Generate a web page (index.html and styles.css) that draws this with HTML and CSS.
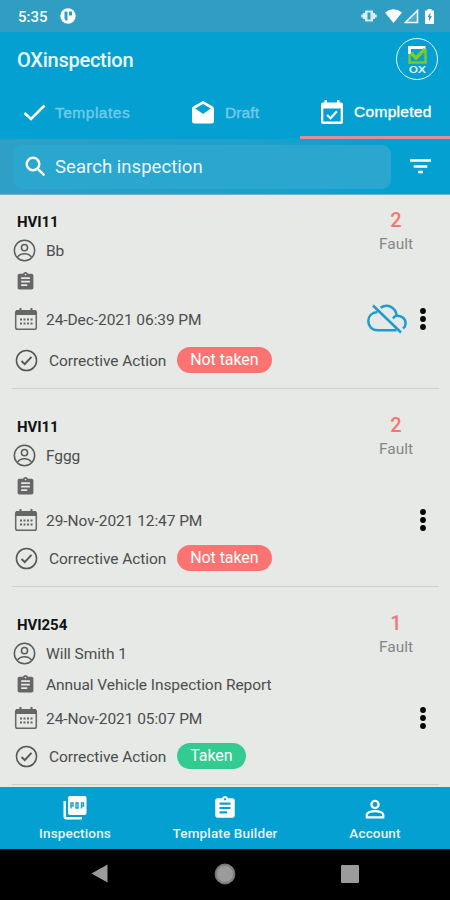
FILE: index.html
```html
<!DOCTYPE html>
<html lang="en">
<head>
<meta charset="utf-8">
<title>OXinspection</title>
<link rel="stylesheet" href="styles.css">
</head>
<body>
<svg width="0" height="0" class="sprite">
  <symbol id="user" viewBox="0 0 24 24"><g fill="none" stroke="currentColor" stroke-width="1.6"><circle cx="12" cy="12" r="10.6"/><circle cx="12" cy="9" r="3.2"/><path d="M4.7 19c1.6-2.6 4-3.6 7.300-3.600s5.700 1 7.300 3.600"/></g></symbol>
  <symbol id="clip" viewBox="0 0 24 24"><path fill="currentColor" d="M19 3h-4.180C14.400 1.840 13.300 1 12 1s-2.400.840-2.820 2H5c-1.100 0-2 .900-2 2v14c0 1.100.900 2 2 2h14c1.100 0 2-.900 2-2V5c0-1.100-.900-2-2-2zm-7 0c.550 0 1 .450 1 1s-.450 1-1 1-1-.450-1-1 .450-1 1-1zm2 14H7v-2h7v2zm3-4H7v-2h10v2zm0-4H7V7h10v2z"/></symbol>
  <symbol id="cal" viewBox="0 0 24 24"><rect x="1.700" y="3.700" width="20.600" height="18.600" rx="1.800" fill="none" stroke="currentColor" stroke-width="1.500"/><path fill="currentColor" d="M2 3h20v5H2zM5.500 1h2v3h-2zM16.500 1h2v3h-2zM6 11.500h2v2H6zM9.500 11.500h2v2h-2zM13 11.500h2v2h-2zM16.500 11.500h2v2h-2zM6 15.500h2v2H6zM9.500 15.500h2v2h-2zM13 15.500h2v2h-2zM16.500 15.500h2v2h-2z"/></symbol>
  <symbol id="done" viewBox="0 0 24 24"><g fill="none" stroke="currentColor" stroke-width="1.600"><circle cx="12" cy="12" r="10.500"/><path stroke-width="2" d="M6.800 12.500l3.400 3.300 7-7.600"/></g></symbol>
  <symbol id="more" viewBox="0 0 8 24"><g fill="#050505"><circle cx="4" cy="4" r="2.900"/><circle cx="4" cy="12" r="2.900"/><circle cx="4" cy="20" r="2.900"/></g></symbol>
</svg>
<div class="app">
  <div class="status">
    <span class="clock">5:35</span>
    <svg width="16" height="16" viewBox="0 0 16 16"><circle cx="8" cy="8" r="7.700" fill="#fff"/><path d="M4.500 3.500h3v9h-2l-1-2zM9 3.500h3v4H9z" fill="#309dc2"/></svg>
    <div class="signals">
      <svg width="16" height="14" viewBox="0 0 16 14"><path d="M4 1.500h8v11H4zM2 4h2v6H2zM12 4h2v6h-2zM.300 5.500h2v3h-2zM13.700 5.500h2v3h-2z" fill="#d5edf5"/><path d="M6.500 3.500h3v7h-3z" fill="#309dc2"/></svg>
      <svg class="wifi" width="17" height="14" viewBox="0 0 17 14"><path d="M0 3.500Q8.500-3 17 3.500L8.500 14z" fill="#fff"/></svg>
      <svg class="cell" width="15" height="15" viewBox="0 0 15 15"><path d="M13.500 1.500v12H1.500z" fill="#51abc9" stroke="#f2fafc" stroke-width="1.600"/></svg>
      <svg class="battery" width="9" height="15" viewBox="0 0 9 15"><path d="M2.500 0h4v1.500H9V15H0V1.500h2.500z" fill="#fff"/><path d="M5.500 3.500L2.500 8H4v4.500L6.800 7H5.200z" fill="#309dc2"/></svg>
    </div>
  </div>
  <header class="header">
    <h1>OXinspection</h1>
    <div class="logo">
      <svg width="19" height="18" viewBox="0 0 19 18"><path d="M1.500 8V1.500h16" fill="none" stroke="#fff" stroke-width="3"/><path d="M1.500 8v8.500h16V3" fill="none" stroke="#7cc52d" stroke-width="2.500"/><path d="M3 7l5 5L17 3" fill="none" stroke="#83cb25" stroke-width="3.400"/></svg>
      <span>OX</span>
    </div>
  </header>
  <nav class="tabs">
    <div class="tab tab-templates"><svg width="23" height="17" viewBox="0 0 23 17"><path d="M1.500 9l6.500 6L21.500 1.500" fill="none" stroke="#fff" stroke-width="2.600"/></svg><span>Templates</span></div>
    <div class="tab tab-draft"><svg width="24" height="23" viewBox="0 0 24 23"><path fill="#fff" d="M1 8Q1 6 3 5L12 0l9 5q2 1 2 3v12q0 2.500-2.500 2.500h-17Q1 22.500 1 20z"/><path fill="#05a0d2" d="M4.300 7.500L12 3l7.700 4.500L12 13z"/></svg><span>Draft</span></div>
    <div class="tab active"><svg width="22" height="24" viewBox="0 0 22 24"><path fill="#fff" d="M3.500 0H6v2.500h10V0h2.500v2.500H20q2 0 2 2V22q0 2-2 2H2q-2 0-2-2V4.500q0-2 2-2h1.500z"/><path fill="#05a0d2" d="M2.300 8.500h17.400v13H2.300z"/><path d="M6 15l3.500 3.300 6.500-7" fill="none" stroke="#fff" stroke-width="2.200"/></svg><span>Completed</span></div>
  </nav>
  <div class="searchbar">
    <div class="field">
      <svg width="21" height="21" viewBox="0 0 21 21"><g fill="none" stroke="#fff" stroke-width="2.500"><circle cx="8" cy="8" r="6.300"/><path d="M12.800 12.800l6.500 6.500"/></g></svg>
      <span>Search inspection</span>
    </div>
    <svg class="filter" width="21" height="15" viewBox="0 0 21 15"><path d="M0 1.500h21M3.700 7.500h13.600M8 13h5" stroke="#fff" stroke-width="2.500"/></svg>
  </div>
  <main class="list">
    <article class="item pending">
      <div class="details">
        <h2>HVI11</h2>
        <div class="row user"><svg><use href="#user"/></svg><span>Bb</span></div>
        <div class="row report"><svg><use href="#clip"/></svg></div>
        <div class="row date"><svg><use href="#cal"/></svg><span>24-Dec-2021 06:39 PM</span></div>
        <div class="row action"><svg><use href="#done"/></svg><span>Corrective Action</span><b class="pill">Not taken</b></div>
      </div>
      <div class="side">
        <div class="fault"><b>2</b><span>Fault</span></div>
        <div class="tools">
          <svg class="cloud" viewBox="0 0 40 30"><g fill="none" stroke="#1e9ccc" stroke-width="2.500"><path d="M10.500 8C5 8.500 1.300 12 1.300 17c0 5.300 3.700 9.300 9.200 9.300h19"/><path d="M13.500 3.600C21-1 28.500 3.500 29.700 11.500c5.500.500 8.900 3.500 8.900 8 0 2-.800 3.600-2.600 5M26 14.500q1.500-2.500 4-3"/><path d="M6 1.500l28 27"/></g></svg>
          <svg class="more"><use href="#more"/></svg>
        </div>
      </div>
    </article>
    <article class="item">
      <div class="details">
        <h2>HVI11</h2>
        <div class="row user"><svg><use href="#user"/></svg><span>Fggg</span></div>
        <div class="row report"><svg><use href="#clip"/></svg></div>
        <div class="row date"><svg><use href="#cal"/></svg><span>29-Nov-2021 12:47 PM</span></div>
        <div class="row action"><svg><use href="#done"/></svg><span>Corrective Action</span><b class="pill">Not taken</b></div>
      </div>
      <div class="side">
        <div class="fault"><b>2</b><span>Fault</span></div>
        <div class="tools"><svg class="more"><use href="#more"/></svg></div>
      </div>
    </article>
    <article class="item">
      <div class="details">
        <h2>HVI254</h2>
        <div class="row user"><svg><use href="#user"/></svg><span>Will Smith 1</span></div>
        <div class="row report"><svg><use href="#clip"/></svg><span>Annual Vehicle Inspection Report</span></div>
        <div class="row date"><svg><use href="#cal"/></svg><span>24-Nov-2021 05:07 PM</span></div>
        <div class="row action"><svg><use href="#done"/></svg><span>Corrective Action</span><b class="pill taken">Taken</b></div>
      </div>
      <div class="side">
        <div class="fault"><b>1</b><span>Fault</span></div>
        <div class="tools"><svg class="more"><use href="#more"/></svg></div>
      </div>
    </article>
  </main>
  <nav class="bottom">
    <div><svg width="24" height="24" viewBox="0 0 24 24"><path d="M1.700 5v15.500q0 1.800 1.800 1.800H19" fill="none" stroke="#fff" stroke-width="2.400"/><rect x="5" y="0" width="18.500" height="19" rx="2" fill="#fff"/><path d="M8 12.500V7h2v3H8M13 7v5h2V7zM18.500 12.500V7h2v3h-2" fill="none" stroke="#1c9dc9" stroke-width="1.400"/></svg><span>Inspections</span></div>
    <div><svg width="26" height="26" viewBox="0 0 24 24" class="builder"><use href="#clip"/></svg><span>Template Builder</span></div>
    <div><svg width="20" height="20" viewBox="0 0 20 20" class="person"><g fill="none" stroke="#fff" stroke-width="2.300"><circle cx="10" cy="5.500" r="3.600"/><path d="M1.800 18.300v-2.500c0-2.500 4.500-3.700 8.200-3.700s8.200 1.200 8.200 3.700v2.500z"/></g></svg><span>Account</span></div>
  </nav>
  <div class="system">
    <svg width="17" height="19" viewBox="0 0 17 19"><path d="M16.500.500v18L.500 9.500z" fill="#9b9b9b"/></svg>
    <svg width="22" height="22" viewBox="0 0 22 22"><circle cx="11" cy="11" r="9.800" fill="#9b9b9b" stroke="#777" stroke-width="1.200"/><circle cx="11" cy="11" r="8.500" fill="none" stroke="#666" stroke-width=".6"/></svg>
    <svg width="18" height="18" viewBox="0 0 18 18"><rect width="18" height="18" rx="1" fill="#9b9b9b"/></svg>
  </div>
</div>
</body>
</html>
```
FILE: styles.css
```css
* { box-sizing: border-box; }
body { margin: 0; font-family: Roboto, "Liberation Sans", sans-serif; }
svg { display: block; flex: none; }
.sprite { position: absolute; }
h1, h2 { margin: 0; }
.app { width: 450px; height: 900px; display: flex; flex-direction: column; background: #e6e9e6; overflow: hidden; white-space: nowrap; }
.status { height: 32px; background: #309dc2; color: #fff; display: flex; align-items: center; padding: 0 16px 0 18px; }
.clock { font-size: 15px; font-weight: 500; width: 42px; padding-top: 1px; }
.signals { display: flex; align-items: center; margin-left: auto; }
.wifi { margin-left: 8px; }
.cell { margin-left: 2px; }
.battery { margin-left: 6px; }
.header { height: 56px; background: #05a0d2; display: flex; align-items: center; justify-content: space-between; padding: 0 12px 2px 17px; }
h1 { color: #eaf8fc; font-size: 20px; font-weight: 500; line-height: 24px; letter-spacing: -.25px; padding-top: 1px; }
.logo { width: 42px; height: 42px; border: 1.5px solid #e4f5fb; border-radius: 50%; color: #e4f5fb; display: flex; flex-direction: column; align-items: center; padding-top: 7px; }
.logo span { font: 600 9px/12px Inter, sans-serif; transform: scaleX(1.35); }
.tabs { height: 51px; background: #05a0d2; display: grid; grid-template-columns: repeat(3, 1fr); }
.tab { display: flex; align-items: center; color: #76c9e5; font: 500 15.500px "Liberation Sans", sans-serif; -webkit-text-stroke: .4px currentColor; padding-bottom: 2px; letter-spacing: .5px; }
.tab-templates { padding-left: 23px; gap: 9px; }
.tab-draft { padding-left: 41px; gap: 10px; letter-spacing: .1px; }
.active { padding-left: 21px; gap: 11px; color: #fff; border-bottom: 3px solid #e28d9f; padding-bottom: 0; letter-spacing: .3px; }
.searchbar { height: 56px; background: linear-gradient(90deg, #309fc5, #1ca0cb 60%, #05a0d2 85%); display: flex; align-items: center; border-bottom: 1px solid #6fb3ca; }
.field { width: 378px; height: 44px; margin-left: 13px; background: #2ba6ce; border-radius: 9px; display: flex; align-items: center; gap: 9px; padding-left: 12px; color: #eaf8fc; font-size: 18.500px; letter-spacing: .05px; }
.field span { padding-top: 1px; }
.filter { margin-left: 19px; }
.list { height: 592px; overflow: hidden; color: #4c4e4d; font-size: 15.500px; letter-spacing: -.07px; }
.item { height: 198px; padding-top: 26px; margin-left: 12px; width: 427px; border-bottom: 1px solid #ced1cf; display: flex; justify-content: space-between; }
h2 { height: 24px; line-height: 25px; font-size: 15px; font-weight: 700; color: #111; padding-left: 5px; }
.row { display: flex; align-items: center; }
.row span { padding-top: 1px; }
.user { height: 32px; padding-left: 1px; gap: 10px; }
.user svg { width: 23px; height: 23px; color: #5b5d5c; }
.report { height: 30px; padding-left: 3px; gap: 10px; }
.report svg { width: 21px; height: 21px; color: #666; }
.date { height: 38px; padding-left: 2px; gap: 8px; }
.date svg { width: 24px; height: 24px; color: #666; }
.action { height: 38px; padding-left: 3px; }
.action svg { width: 23px; height: 23px; color: #555756; margin-right: 11px; }
.pill { background: #fb7471; color: #fff; font-weight: 400; font-size: 16px; height: 26px; line-height: 26px; padding: 0 13px; border-radius: 13px; margin-left: 11px; }
.pill.taken { background: #32cb91; }
.side { width: 86px; display: flex; flex-direction: column; }
.fault { height: 50px; display: flex; flex-direction: column; align-items: center; color: #858786; font-size: 15.500px; line-height: 26px; }
.fault b { font-size: 20px; font-weight: 500; color: #f47774; line-height: 21px; }
.tools { display: flex; align-items: center; justify-content: flex-end; height: 38px; margin-top: 36px; padding-right: 12px; gap: 12px; }
.more { width: 8px; height: 24px; }
.cloud { width: 40px; height: 30px; }
.pending { height: 194px; padding-top: 15px; }
.pending .user { height: 33px; }
.pending .report { height: 29px; }
.pending .date { height: 46px; }
.pending .tools { height: 46px; }
.pending .action { height: 36px; }
.bottom { height: 62px; background: #05a0d2; display: grid; grid-template-columns: repeat(3, 1fr); color: #e5f6fc; font-size: 13.500px; font-weight: 500; letter-spacing: .15px; }
.bottom div { display: flex; flex-direction: column; align-items: center; justify-content: flex-end; padding-bottom: 8px; gap: 5px; }
.builder { color: #fff; margin-bottom: -1px; }
.person { margin-bottom: 1px; }
.system { height: 51px; background: #000; display: flex; align-items: center; justify-content: space-between; padding: 0 91px 2px 91px; }
```
